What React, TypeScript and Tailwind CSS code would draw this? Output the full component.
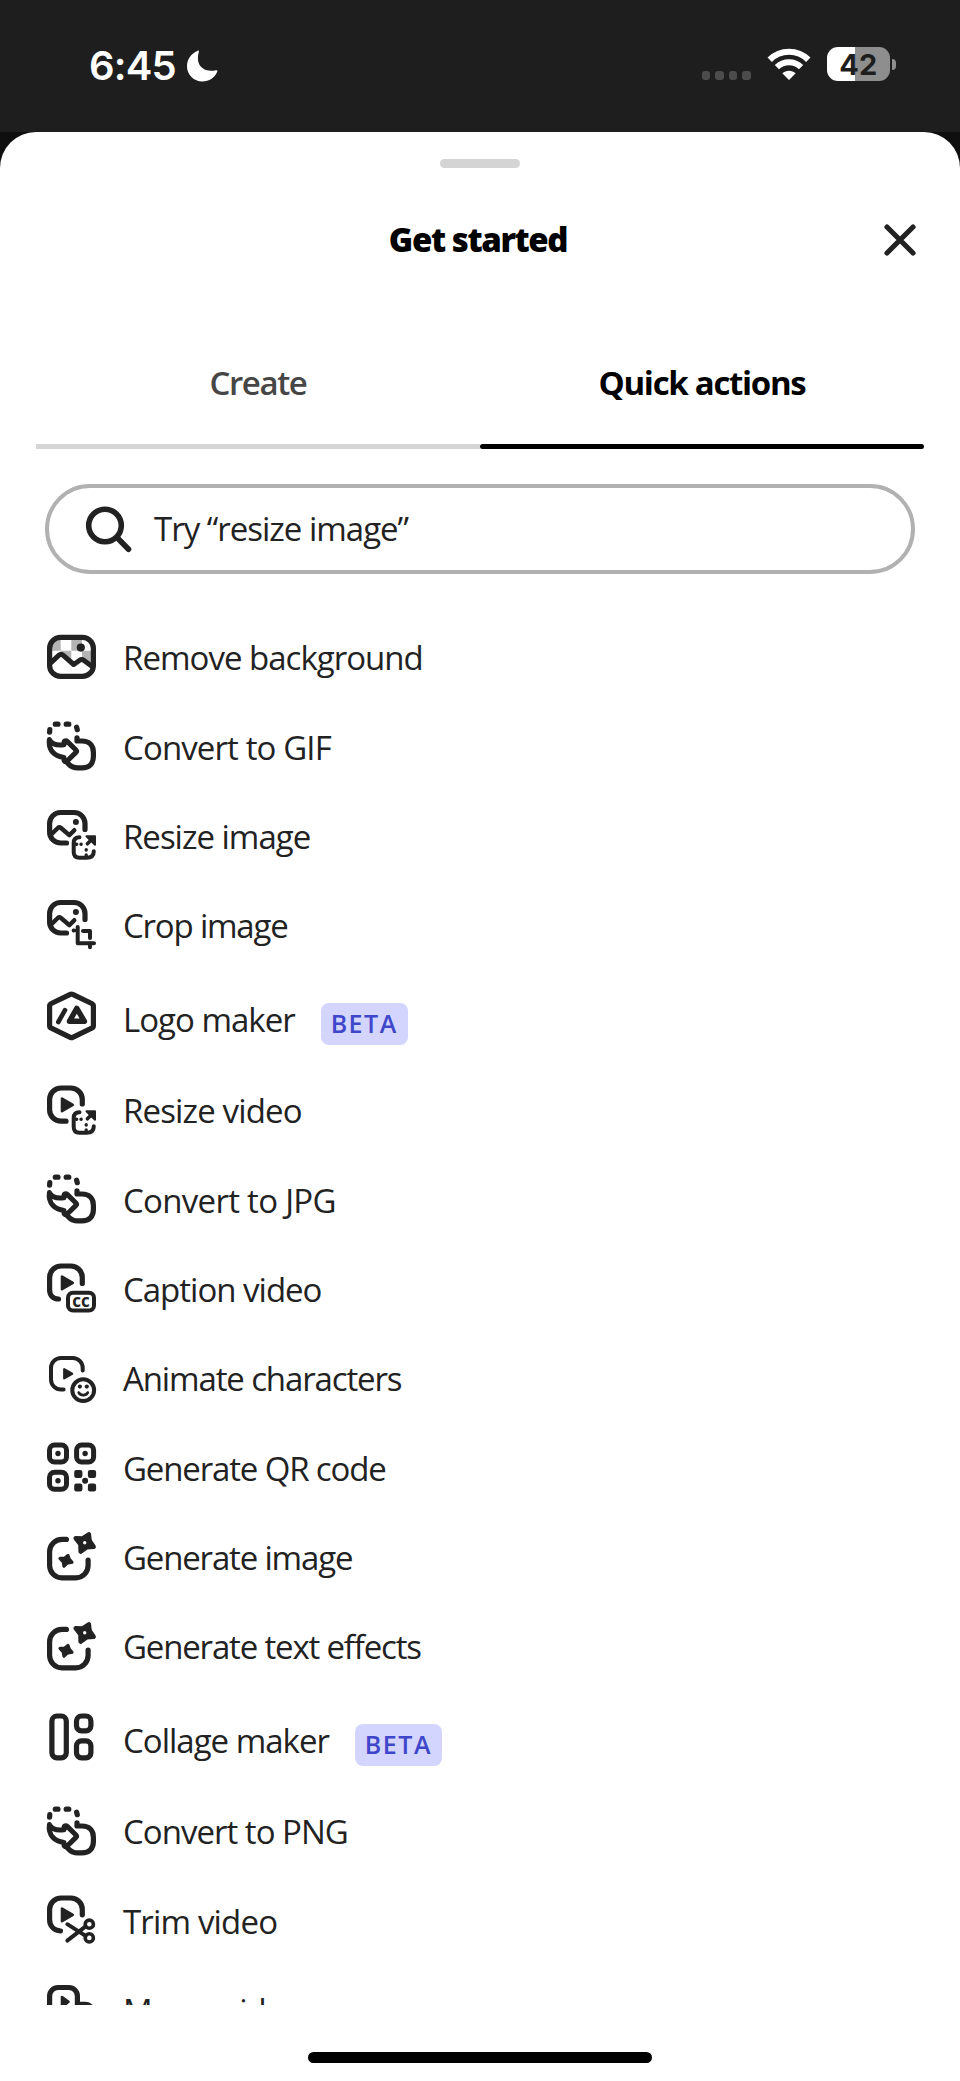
import type { ReactNode } from "react";

const Svg = ({ children }: { children: ReactNode }) => (
  <svg
    viewBox="0 0 54 54"
    className="h-[54px] w-[54px] shrink-0"
    fill="none"
    stroke="#222222"
    strokeWidth={5.2}
    strokeLinecap="round"
    strokeLinejoin="round"
  >
    {children}
  </svg>
);

// partes compartilhadas entre os ícones
const ImageFrame = () => (
  <>
    <path d="M41 21.5V15.5A11 11 0 0 0 30 4.5H16.6A11 11 0 0 0 5.6 15.5V24A11 11 0 0 0 16.6 35H22.5" />
    <path d="M7 26.6L13.8 20Q15.4 18.5 17 20L25.3 27.2L30.3 22.2" strokeWidth={4.4} />
    <circle cx="31.9" cy="14" r="3" fill="#222222" stroke="none" />
  </>
);

const Play = () => (
  <path d="M18 15.5V28.2L28.8 21.8Z" fill="#222222" strokeWidth={2.6} />
);

const ResizeCorner = () => (
  <g strokeWidth={4}>
    <path d="M35.5 29.2C31.5 29.2 29.7 31 29.7 35V44C29.7 48 31.5 49.8 35.5 49.8H42.5C47.5 49.8 49.8 47.5 49.8 43.3" />
    <path d="M42.5 28.2H51V36.8Z" fill="#222222" strokeWidth={2} />
    <path d="M48 31.200L43.400 35.800" strokeWidth={3.600} />
    <path d="M32.500 36.200H32.700M37 36.200H37.200M42.200 41.800V42M42.200 47V47.200" strokeWidth={3.400} />
  </g>
);

const RemoveBackgroundIcon = () => (
  <Svg>
    <path
      d="M7 10H16.7V20.8H7ZM27.3 10H38V20.8H27.3ZM16.7 20.8H27.3V31H16.7ZM38 20.8H48V34H38Z"
      fill="#b4b4b4"
      stroke="none"
    />
    <path d="M7 34L15 26Q17 24 19 26L29.7 35L35.7 30.6Q37.7 29.2 39.7 30.6L48 37V45H7Z" fill="#ffffff" stroke="none" />
    <rect x="5.6" y="7.4" width="43.8" height="39" rx="11" />
    <path d="M7 32.6L15 25.2Q17 23.4 19 25.2L29.7 34.5L35.7 30.2Q37.7 28.8 39.7 30.2L47.5 36" strokeWidth={5} />
    <circle cx="36.8" cy="17.6" r="4.1" fill="#222222" stroke="none" />
  </Svg>
);

const ConvertIcon = () => (
  <Svg>
    <path d="M5.6 13.2L5.8 10.5M11.3 5.2H14M22.2 5.2H24.8M32.6 8.2L33.3 10.7" />
    <path d="M33 18.8V22H38C45.2 22 49.4 26.3 49.4 33.2V37.6C49.4 44.6 45.2 48.9 38 48.9H34C29.5 48.9 26.5 47.2 24 44.4" />
    <path
      d="M5.4 20.6C7.5 25 13 26.6 20 25.8V23.6C20 21.8 22 21.3 23.2 22.4L32.2 31.3Q33 32.2 32.2 33.1L23.2 42C22 43.2 20 42.6 20 40.8V38.4C11 37.6 4 31.5 5.4 20.6Z"
      strokeWidth={5}
    />
  </Svg>
);

const ResizeImageIcon = () => (
  <Svg>
    <ImageFrame />
    <ResizeCorner />
  </Svg>
);

const CropImageIcon = () => (
  <Svg>
    <ImageFrame />
    <path d="M33.7 29V45.2H50M29.6 32.6H30M39 33H46V40M46 45V49.3" strokeWidth={4} />
  </Svg>
);

const LogoMakerIcon = () => (
  <Svg>
    <path d="M26.3 5.3Q27.5 4.7 28.7 5.3L47.7 14.5Q49.4 15.4 49.4 17V36.7Q49.4 38.4 47.7 39.2L28.7 48.4Q27.5 49 26.3 48.4L7.3 39.2Q5.6 38.4 5.6 36.7V17Q5.6 15.4 7.3 14.5Z" />
    <path d="M14.3 33L21 21.2" strokeWidth={4.6} />
    <path d="M32.8 19.3L40.4 32.3H25.4Z" strokeWidth={5.4} />
  </Svg>
);

const ResizeVideoIcon = () => (
  <Svg>
    <path d="M38.3 21V16.5A11.5 11.5 0 0 0 26.8 5H17.1A11.5 11.5 0 0 0 5.6 16.5V26.7A11.5 11.5 0 0 0 17.1 38.2H22" />
    <Play />
    <ResizeCorner />
  </Svg>
);

const CaptionVideoIcon = () => (
  <Svg>
    <path d="M38.3 22.4V16.5A11.5 11.5 0 0 0 26.8 5H17.1A11.5 11.5 0 0 0 5.6 16.5V29C5.6 34 9 38 14.5 38" />
    <Play />
    <rect x="24" y="31.7" width="26" height="17.8" rx="5" strokeWidth={4} />
    <text
      x="37.1"
      y="45.6"
      textAnchor="middle"
      fill="#222222"
      stroke="none"
      className="font-['Open_Sans',sans-serif] text-[17px] font-bold"
    >
      cc
    </text>
  </Svg>
);

const AnimateIcon = () => (
  <Svg>
    <g strokeWidth={4}>
      <path d="M38.7 19.6V17A10 10 0 0 0 28.7 7H17A10 10 0 0 0 7 17V28.5A10 10 0 0 0 17 38.5H19.6" />
      <path d="M20.2 18.2V27.4L28.2 22.8Z" fill="#222222" strokeWidth={2.2} />
      <circle cx="39.2" cy="39.2" r="10.9" />
      <path d="M34.8 41.6C36.5 45 42 45 43.7 41.6" strokeWidth={2.8} />
    </g>
    <g fill="#222222" stroke="none">
      <circle cx="35.9" cy="35.6" r="2.1" />
      <circle cx="42.8" cy="35.6" r="2.1" />
    </g>
  </Svg>
);

const QrCodeIcon = () => (
  <Svg>
    <g strokeWidth={5}>
      <rect x="5.5" y="5" width="17" height="17" rx="5" />
      <rect x="32.6" y="5" width="17" height="17" rx="5" />
      <rect x="5.5" y="32.2" width="17" height="17" rx="5" />
    </g>
    <g fill="#222222" stroke="none">
      <circle cx="14" cy="13.5" r="2.7" />
      <circle cx="41.1" cy="13.5" r="2.7" />
      <circle cx="14" cy="40.7" r="2.7" />
      <circle cx="41.1" cy="40.7" r="3" />
      <rect x="30.2" y="29.9" width="8.2" height="8" rx="2.2" />
      <rect x="43.9" y="29.9" width="8.2" height="8" rx="2.2" />
      <rect x="30.2" y="43.5" width="8.2" height="8" rx="2.2" />
      <rect x="43.9" y="43.5" width="8.2" height="8" rx="2.2" />
    </g>
  </Svg>
);

const GenerateIcon = () => (
  <Svg>
    <path d="M22.4 10.4H18A12.4 12.4 0 0 0 5.6 22.8V36.5A12.4 12.4 0 0 0 18 48.9H31.7A12.4 12.4 0 0 0 44.1 36.5V31.2" />
    <path
      d="M44.9 5.2L45.6 11.6L49.7 17.8L42.6 18.4L36.6 22.6L36.4 15.4L31.6 9.2L38.8 9.4Z"
      fill="#222222"
      strokeWidth={4.4}
    />
    <circle cx="40.7" cy="13.8" r="1.7" fill="#ffffff" stroke="none" />
    <path
      d="M24 26.4L25.2 30L28 33.2L23.2 34.2L20 37.2L19.2 32.8L16 29.4L20.6 29.2Z"
      fill="#222222"
      strokeWidth={3.2}
    />
  </Svg>
);

const CollageIcon = () => (
  <Svg>
    <rect x="7.9" y="6" width="14.4" height="41.8" rx="5" />
    <rect x="32.5" y="6" width="14.4" height="14.8" rx="5" />
    <rect x="32.5" y="30.8" width="14.4" height="17" rx="5" />
  </Svg>
);

const TrimIcon = () => (
  <Svg>
    <path d="M38.3 21.8V16.5A11.5 11.5 0 0 0 26.8 5H17.1A11.5 11.5 0 0 0 5.6 16.5V26.7C5.6 33 10 37.4 16.5 38" />
    <Play />
    <g strokeWidth={3.6}>
      <circle cx="45.3" cy="31.2" r="4.1" />
      <circle cx="45.3" cy="44.9" r="4.1" />
      <path d="M23.3 31.2L41.6 42.8M23.3 47.6L41.6 33.4" strokeWidth={3.9} />
    </g>
  </Svg>
);

const MergeIcon = () => (
  <Svg>
    <path d="M33.4 38V14A8.5 8.5 0 0 0 24.9 5.5H14.1A8.5 8.5 0 0 0 5.6 14V29.5A8.5 8.5 0 0 0 14.1 38Z" />
    <path d="M18 15V25L24.5 19.8Z" fill="#222222" strokeWidth={2.6} />
    <path d="M35 22.3H41A8.5 8.5 0 0 1 49.4 31V40A8.5 8.5 0 0 1 41 48.9H30A8.5 8.5 0 0 1 21.5 42" />
  </Svg>
);

type Action = {
  label: string;
  icon: () => ReactNode;
  tracking: string;
  beta?: boolean;
};

const actions: Action[] = [
  { label: "Remove background", icon: RemoveBackgroundIcon, tracking: "tracking-[-0.98px]" },
  { label: "Convert to GIF", icon: ConvertIcon, tracking: "tracking-[-0.88px]" },
  { label: "Resize image", icon: ResizeImageIcon, tracking: "tracking-[-1px]" },
  { label: "Crop image", icon: CropImageIcon, tracking: "tracking-[-1.2px]" },
  { label: "Logo maker", icon: LogoMakerIcon, tracking: "tracking-[-1px]", beta: true },
  { label: "Resize video", icon: ResizeVideoIcon, tracking: "tracking-[-0.85px]" },
  { label: "Convert to JPG", icon: ConvertIcon, tracking: "tracking-[-0.7px]" },
  { label: "Caption video", icon: CaptionVideoIcon, tracking: "tracking-[-1px]" },
  { label: "Animate characters", icon: AnimateIcon, tracking: "tracking-[-1.13px]" },
  { label: "Generate QR code", icon: QrCodeIcon, tracking: "tracking-[-1.15px]" },
  { label: "Generate image", icon: GenerateIcon, tracking: "tracking-[-1.17px]" },
  { label: "Generate text effects", icon: GenerateIcon, tracking: "tracking-[-1.17px]" },
  { label: "Collage maker", icon: CollageIcon, tracking: "tracking-[-1px]", beta: true },
  { label: "Convert to PNG", icon: ConvertIcon, tracking: "tracking-[-0.98px]" },
  { label: "Trim video", icon: TrimIcon, tracking: "tracking-[-0.83px]" },
  { label: "Merge videos", icon: MergeIcon, tracking: "tracking-[-1px]" },
];

function StatusBar() {
  return (
    <header className="flex h-[131.5px] shrink-0 items-start justify-between bg-[#1e1e1e] pt-[47px] pr-[64px] pl-[89px] font-['Inter',sans-serif]">
      <div className="flex items-center">
        <span className="text-[40px] leading-[38px] font-semibold tracking-[-0.8px] text-white">6:45</span>
        <svg viewBox="0 0 32 32" className="ml-[10px] h-8 w-8" fill="#ffffff">
          <path d="M11.5 .9C12.3 .2 13.3 .8 12.8 2C11 8.8 12 14 15.5 17.3C19 20.6 24 21.6 30 20.2C31.4 19.9 31.8 20.7 31.2 21.8C28.6 28 23 31.5 16.5 31.5C7.8 31.5 1 24.8 1 16.2C1 9 5.2 3.5 11.5 .9Z" />
        </svg>
      </div>
      <div className="flex items-center">
        <div className="mt-[23px] flex gap-[5px] pb-px">
          <i className="h-[9px] w-[8.4px] rounded-[3px] bg-[#4c4c4c]" />
          <i className="h-[9px] w-[8.4px] rounded-[3px] bg-[#4c4c4c]" />
          <i className="h-[9px] w-[8.4px] rounded-[3px] bg-[#4c4c4c]" />
          <i className="h-[9px] w-[8.4px] rounded-[3px] bg-[#4c4c4c]" />
        </div>
        <svg viewBox="0 0 44 32" className="ml-4 h-8 w-[44px]" fill="none" stroke="#ffffff">
          <path d="M2.7 11.7C13.5 1.1 30.5 1.1 41.3 11.7" strokeWidth={6.2} />
          <path d="M9.9 19.2C16.6 12.6 27.4 12.6 34.1 19.2" strokeWidth={6} />
          <path d="M22 32L15.3 25.3C19 21.8 25 21.8 28.7 25.3Z" fill="#ffffff" stroke="none" />
        </svg>
        <div className="ml-4 flex h-[34px] w-[63.5px] items-center justify-center rounded-[11px] bg-[linear-gradient(to_right,#fff_27.5px,#8e8e8e_27.5px)] text-[29px] leading-none font-bold text-[#1e1e1e]">
          42
        </div>
        <i className="ml-[2px] h-[11px] w-1 rounded-r-full bg-[#8e8e8e]" />
      </div>
    </header>
  );
}

export default function App() {
  return (
    <div className="flex h-[2081px] w-[960px] flex-col overflow-hidden bg-[#0f0f0f] font-['Open_Sans',sans-serif]">
      <StatusBar />

      <main className="flex flex-1 flex-col rounded-t-[36px] bg-white">
        <div className="mx-auto mt-[27px] h-[9px] w-20 rounded-full bg-[#d4d4d4]" />

        <div className="mt-[40px] grid h-16 grid-cols-[1fr_auto_1fr] items-center">
          <h1 className="col-start-2 mr-1 text-[33px] leading-none font-extrabold tracking-[-1.4px] text-black">
            Get started
          </h1>
          <button aria-label="Close" className="mr-[43px] justify-self-end">
            <svg viewBox="0 0 34 34" className="h-[34px] w-[34px]" stroke="#222222" strokeWidth={5.2} strokeLinecap="round">
              <path d="M4 4L30 30M30 4L4 30" />
            </svg>
          </button>
        </div>

        <nav className="mx-9 mt-[61.5px] grid h-[116px] grid-cols-2 text-[33px] leading-[46px]">
          <button className="flex flex-col items-center justify-between pt-[27px] font-semibold tracking-[-1.4px] text-[#464646]">
            Create
            <i className="h-[5px] w-full bg-[#d5d5d5]" />
          </button>
          <button className="flex flex-col items-center justify-between pt-[27px] font-bold tracking-[-1.3px] text-black">
            Quick actions
            <i className="h-[5px] w-full rounded-full bg-black" />
          </button>
        </nav>

        <div className="mx-[45px] mt-[35px] flex h-[90px] shrink-0 items-center rounded-full border-[4.5px] border-[#b1b1b1] pl-[36px]">
          <svg viewBox="0 0 48 48" className="h-12 w-12" fill="none" stroke="#222222" strokeWidth={5.6} strokeLinecap="round">
            <circle cx="20" cy="20.5" r="16.3" />
            <path d="M32.5 33L43.5 44.3" />
          </svg>
          <span className="ml-[21px] text-[33px] tracking-[-1px] text-[#222222]">Try “resize image”</span>
        </div>

        <ul className="mt-[38px] h-[1392.5px] shrink-0 overflow-hidden pl-[44px]">
          {actions.map(({ label, icon: Icon, tracking, beta }) => (
            <li key={label} className={beta ? "flex h-[95.7px] items-center" : "flex h-[89.33px] items-center"}>
              <div className={beta ? "pb-[3px]" : ""}>
                <Icon />
              </div>
              <span className={`ml-[25px] text-[33px] whitespace-nowrap text-[#222222] ${beta ? "pt-[5px]" : "pt-[3px]"} ${tracking}`}>
                {label}
              </span>
              {beta && (
                <span className="mt-[14px] ml-[26px] flex h-[42.5px] w-[87px] items-center justify-center rounded-lg bg-[#d3d5ff] text-[25px] font-semibold tracking-[1.5px] text-[#4046ca]">
                  BETA
                </span>
              )}
            </li>
          ))}
        </ul>

        <div className="mx-auto mt-[47.5px] h-[11px] w-[344px] shrink-0 rounded-full bg-black" />
      </main>
    </div>
  );
}
